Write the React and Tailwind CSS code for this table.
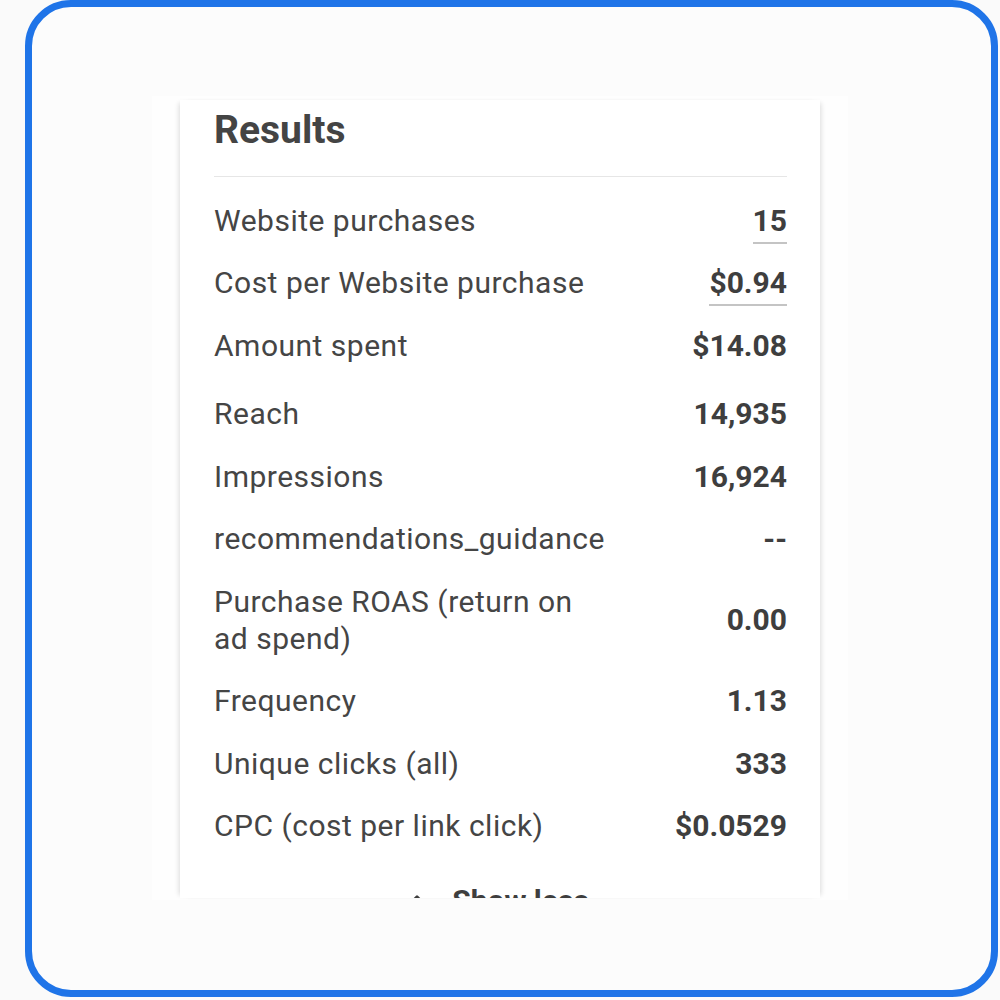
import { ChevronUp } from 'lucide-react'

const rows = [
  { label: 'Website purchases', value: '15', underline: true },
  { label: 'Cost per Website purchase', value: '$0.94', underline: true },
  { label: 'Amount spent', value: '$14.08' },
  { label: 'Reach', value: '14,935', gapTop: true },
  { label: 'Impressions', value: '16,924' },
  { label: 'recommendations_guidance', value: '--' },
  { label: 'Purchase ROAS (return on ad spend)', value: '0.00' },
  { label: 'Frequency', value: '1.13' },
  { label: 'Unique clicks (all)', value: '333' },
  { label: 'CPC (cost per link click)', value: '$0.0529' },
]

function Row({ label, value, underline, gapTop }) {
  return (
    <div className={`flex items-center justify-between py-[12.75px] ${gapTop ? 'mt-[6px]' : ''}`}>
      <div className="max-w-[392px] text-[30px] leading-[37px] tracking-[0.5px] text-[#454545]">{label}</div>
      <div className="relative text-[30px] font-bold leading-[37px] text-[#3e3e3e]">
        {value}
        {underline && (
          <div className="absolute left-0 right-0 -bottom-[5px] h-[2px] bg-[#c4c4c4]" />
        )}
      </div>
    </div>
  )
}

export default function App() {
  return (
    <div className="w-[1000px] h-[1000px] bg-[#fafafa] pl-[25px] font-['Roboto',sans-serif]">
      <div className="w-[973px] h-[997px] rounded-[46px] border-[7px] border-[#1f74e8] bg-[#fcfcfc] pt-[89px] pl-[120px]">
        <div className="w-[696px] h-[804px] bg-[#fefefe] pl-[28px] pt-[4px]">
          <div className="w-[640px] h-[798px] overflow-hidden bg-white pl-[34px] pr-[33px] pt-[7px] shadow-[-4px_0_5px_-3px_rgba(0,0,0,0.14),4px_0_5px_-3px_rgba(0,0,0,0.14)]">
            <h2 className="text-[39px] font-bold leading-[46px] text-[#444]">Results</h2>
            <div className="mt-[23px] h-px bg-[#e6e6e6]" />
            <div className="pt-[11.75px]">
              {rows.map((r) => (
                <Row key={r.label} {...r} />
              ))}
            </div>
            <div className="flex items-center justify-center gap-[22px] pt-[25px] pr-[8px] text-[#3e3e3e]">
              <ChevronUp size={26} strokeWidth={2.6} />
              <span className="text-[30px] font-bold leading-[37px]">Show less</span>
            </div>
          </div>
        </div>
      </div>
    </div>
  )
}
